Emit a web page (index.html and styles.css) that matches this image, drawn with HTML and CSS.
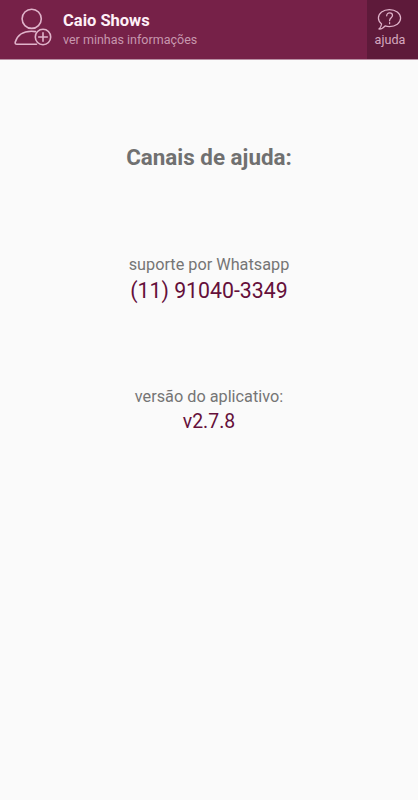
FILE: index.html
```html
<!DOCTYPE html>
<html lang="pt-BR">
<head>
<meta charset="utf-8">
<title>Ajuda</title>
<link rel="stylesheet" href="styles.css">
</head>
<body>
<header class="topbar">
  <a class="profile">
    <svg class="profile-icon" width="40" height="40" viewBox="0 0 40 40">
      <circle cx="17.7" cy="11.8" r="9.6"/>
      <path d="M21.5 24.6Q19.7 24.2 17.5 24.2C9 24.2 3.2 28.5 1.2 35.2Q.9 37.3 2.9 37.3H22.5"/>
      <circle cx="29" cy="30" r="7.7"/>
      <path d="M29 25.7v8.6M24.7 30h8.6"/>
    </svg>
    <span class="profile-text">
      <strong class="name">Caio Shows</strong>
      <span class="info">ver minhas informações</span>
    </span>
  </a>
  <a class="help">
    <svg class="help-icon" width="26" height="24" viewBox="0 0 26 24">
      <path d="M4.6 16C2.5 14.4 1.4 12.4 1.4 10.1C1.4 5.2 6.3 1.6 12.4 1.6S23.6 5.2 23.6 10.1S18.6 18.5 12.4 18.5Q10.1 18.5 8.1 17.9Q5.4 21.3 1.9 21Q4.2 19.1 4.6 16Z"/>
      <path d="M9.7 7.8C9.7 5.9 10.9 4.8 12.7 4.8S15.5 5.9 15.5 7.5C15.5 9.6 12.6 9.8 12.6 12.4V12.8M12.6 14.6V15.7"/>
    </svg>
    <span>ajuda</span>
  </a>
</header>
<main class="content">
  <h1 class="title">Canais de ajuda:</h1>
  <section class="support">
    <p class="label">suporte por Whatsapp</p>
    <p class="phone">(11) 91040-3349</p>
  </section>
  <section class="version">
    <p class="label">versão do aplicativo:</p>
    <p class="number">v2.7.8</p>
  </section>
</main>
</body>
</html>
```
FILE: styles.css
```css
* { box-sizing: border-box; }
body { margin: 0; min-height: 800px; background: #fafafa; font-family: Roboto, sans-serif; }
h1, p { margin: 0; }
.topbar { display: flex; justify-content: space-between; height: 60px; background: #762148; border-bottom: 1px solid #b990a4; }
.profile { display: flex; }
.profile-icon, .help-icon { fill: none; stroke: #e0b3ca; stroke-width: 1.6; stroke-linecap: round; stroke-linejoin: round; }
.profile-icon { margin: 7px 9px 0 14px; flex: none; }
.profile-text { display: flex; flex-direction: column; padding-top: 10px; }
.name { color: #fff0f7; font-size: 16.5px; line-height: 21px; font-weight: 700; }
.info { color: #c797ae; font-size: 12.5px; line-height: 17px; }
.help { display: flex; flex-direction: column; align-items: center; width: 51px; padding: 8px 5px 0 0; background: #5e1a3a; color: #d5a8bf; font-size: 12.6px; line-height: 16px; }
.help-icon { stroke-width: 1.25; }
.content { display: flex; flex-direction: column; align-items: center; text-align: center; padding-top: 82px; }
.title { color: #707070; font-size: 22.4px; line-height: 30px; font-weight: 700; }
.support { margin-top: 82px; }
.label { color: #757575; font-size: 16.25px; line-height: 22px; }
.phone { color: #65103a; font-size: 21.3px; line-height: 30px; }
.version { margin-top: 80px; }
.number { color: #65103a; font-size: 19.4px; line-height: 28px; }
```
